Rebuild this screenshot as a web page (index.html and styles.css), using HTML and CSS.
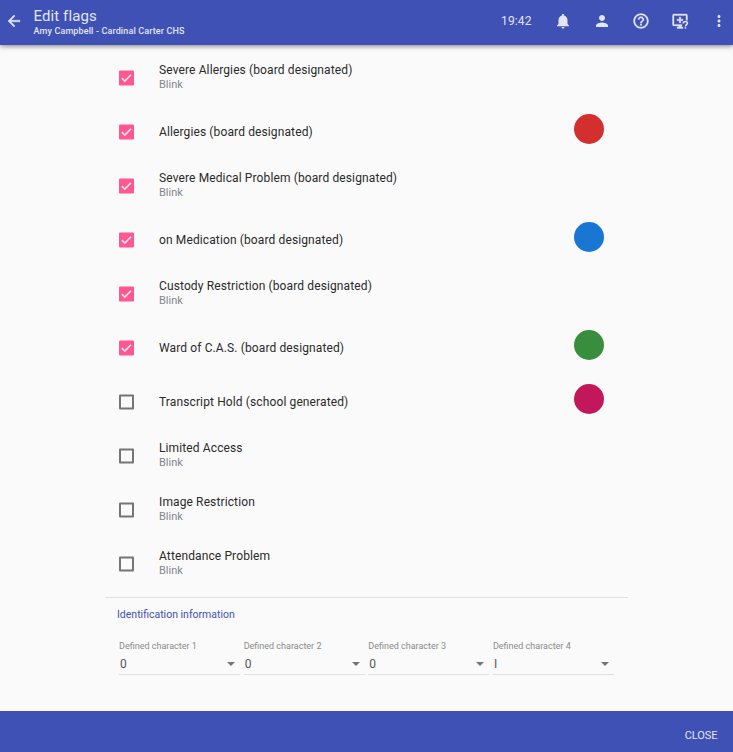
FILE: index.html
```html
<!DOCTYPE html>
<html lang="en">
<head>
<meta charset="utf-8">
<title>Edit flags</title>
<link rel="stylesheet" href="styles.css">
</head>
<body>
<header class="topbar">
  <svg class="back" viewBox="0 0 24 24"><path d="M20 11H7.83l5.59-5.59L12 4l-8 8 8 8 1.41-1.41L7.83 13H20z"/></svg>
  <div class="heading">
    <h1 class="title">Edit flags</h1>
    <p class="subtitle">Amy Campbell - Cardinal Carter CHS</p>
  </div>
  <span class="clock">19:42</span>
  <nav class="actions">
    <svg viewBox="0 0 24 24"><path d="M12 22c1.100 0 2-.9 2-2h-4c0 1.100.89 2 2 2zm6-6v-5c0-3.070-1.640-5.640-4.500-6.320V4c0-.83-.67-1.500-1.500-1.500s-1.500.67-1.500 1.500v.68C7.630 5.360 6 7.920 6 11v5l-2 2v1h16v-1z"/></svg>
    <svg viewBox="0 0 24 24"><path d="M12 12c2.210 0 4-1.790 4-4s-1.790-4-4-4-4 1.790-4 4 1.790 4 4 4zm0 2c-2.670 0-8 1.340-8 4v2h16v-2c0-2.660-5.330-4-8-4z"/></svg>
    <svg class="bold" viewBox="0 0 24 24"><path d="M11 18h2v-2h-2zM12 2C6.480 2 2 6.480 2 12s4.480 10 10 10 10-4.480 10-10S17.520 2 12 2zm0 18c-4.410 0-8-3.590-8-8s3.590-8 8-8 8 3.590 8 8-3.590 8-8 8zm0-14c-2.210 0-4 1.790-4 4h2c0-1.100.9-2 2-2s2 .9 2 2c0 2-3 1.750-3 5h2c0-2.250 3-2.500 3-5 0-2.210-1.790-4-4-4z"/></svg>
    <svg class="bold" viewBox="0 0 24 24"><path d="M4 2.500h16a2 2 0 0 1 2 2V11h-2V4.500H4v12h10.500v2H14V20h2v2H8v-2h2v-1.500H4a2 2 0 0 1-2-2v-12a2 2 0 0 1 2-2zM11 6.500h2v3h3v2h-3v3h-2v-3H8v-2h3z"/><path class="mark" d="M16.300 15.200c0-1.700 1.200-2.700 2.800-2.700s2.800 1 2.800 2.500c0 1.800-2.700 1.900-2.700 4.200M19.200 20.300v2"/></svg>
    <svg viewBox="0 0 24 24"><path d="M12 8c1.100 0 2-.9 2-2s-.9-2-2-2-2 .9-2 2 .9 2 2 2zm0 2c-1.100 0-2 .9-2 2s.9 2 2 2 2-.9 2-2-.9-2-2-2zm0 6c-1.100 0-2 .9-2 2s.9 2 2 2 2-.9 2-2-.9-2-2-2z"/></svg>
  </nav>
</header>

<main class="content">
  <ul class="flags">
    <li class="flag"><span class="box on"><svg viewBox="0 0 15 15"><path d="M2.800 7.600l3 3 6.200-6.400"/></svg></span><div class="label"><span class="name">Severe Allergies (board designated)</span><span class="note">Blink</span></div></li>
    <li class="flag"><span class="box on"><svg viewBox="0 0 15 15"><path d="M2.800 7.600l3 3 6.200-6.400"/></svg></span><div class="label"><span class="name">Allergies (board designated)</span></div><span class="dot red"></span></li>
    <li class="flag"><span class="box on"><svg viewBox="0 0 15 15"><path d="M2.800 7.600l3 3 6.200-6.400"/></svg></span><div class="label"><span class="name">Severe Medical Problem (board designated)</span><span class="note">Blink</span></div></li>
    <li class="flag"><span class="box on"><svg viewBox="0 0 15 15"><path d="M2.800 7.600l3 3 6.200-6.400"/></svg></span><div class="label"><span class="name">on Medication (board designated)</span></div><span class="dot blue"></span></li>
    <li class="flag"><span class="box on"><svg viewBox="0 0 15 15"><path d="M2.800 7.600l3 3 6.200-6.400"/></svg></span><div class="label"><span class="name">Custody Restriction (board designated)</span><span class="note">Blink</span></div></li>
    <li class="flag"><span class="box on"><svg viewBox="0 0 15 15"><path d="M2.800 7.600l3 3 6.200-6.400"/></svg></span><div class="label"><span class="name">Ward of C.A.S. (board designated)</span></div><span class="dot green"></span></li>
    <li class="flag"><span class="box"></span><div class="label"><span class="name">Transcript Hold (school generated)</span></div><span class="dot pink"></span></li>
    <li class="flag"><span class="box"></span><div class="label"><span class="name">Limited Access</span><span class="note">Blink</span></div></li>
    <li class="flag"><span class="box"></span><div class="label"><span class="name">Image Restriction</span><span class="note">Blink</span></div></li>
    <li class="flag"><span class="box"></span><div class="label"><span class="name">Attendance Problem</span><span class="note">Blink</span></div></li>
  </ul>
  <section class="ident">
    <h2 class="section-title">Identification information</h2>
    <div class="fields">
      <div class="field"><span class="caption">Defined character 1</span><div class="select"><span>0</span><i class="caret"></i></div></div>
      <div class="field"><span class="caption">Defined character 2</span><div class="select"><span>0</span><i class="caret"></i></div></div>
      <div class="field"><span class="caption">Defined character 3</span><div class="select"><span>0</span><i class="caret"></i></div></div>
      <div class="field"><span class="caption">Defined character 4</span><div class="select"><span>I</span><i class="caret"></i></div></div>
    </div>
  </section>
</main>

<footer class="bottombar"><span class="close">CLOSE</span></footer>
</body>
</html>
```
FILE: styles.css
```css
* { box-sizing: border-box; margin: 0; padding: 0; }
body {
  height: 752px;
  display: flex;
  flex-direction: column;
  overflow: hidden;
  background: #fafafa;
  color: #2a2a2a;
  font-family: Roboto, sans-serif;
}
.topbar {
  height: 45px;
  flex: none;
  display: flex;
  background: #3f51b5;
  color: #e2e5f4;
  box-shadow: 0 1px 5px rgba(0, 0, 0, .5);
}
.topbar svg { width: 18px; height: 18px; fill: currentColor; }
.topbar .back { margin: 12px 0 0 5px; stroke: currentColor; stroke-width: .6; }
.topbar .bold { stroke: currentColor; stroke-width: .4; }
.heading { margin-left: 10.500px; padding-top: 7px; flex: 1; }
.title { font-size: 15px; line-height: 18px; font-weight: 400; letter-spacing: .1px; }
.subtitle { font-size: 9px; line-height: 12px; font-weight: 500; letter-spacing: .13px; }
.clock { font-size: 12px; line-height: 14px; margin: 14px 22.500px 0 0; letter-spacing: .1px; }
.actions { display: flex; gap: 21px; padding: 12px 5px 0 0; }
.topbar .mark { fill: none; stroke: currentColor; stroke-width: 2; }

.content { flex: 1; padding: 6px 105px 0; }
.flags { list-style: none; padding: 0 24px 0 14px; }
.flag { height: 54px; display: flex; align-items: center; }
.box { width: 15px; height: 15px; border: 2px solid #757575; border-radius: 1px; margin-bottom: 1px; transform: translateY(.5px); }
.box.on { border: 0; background: #ff5790; }
.box svg { display: block; width: 15px; height: 15px; fill: none; stroke: #fde4ed; stroke-width: 1.600; }
.label { flex: 1; margin-left: 25px; display: flex; flex-direction: column; }
.name { font-size: 12px; line-height: 14px; letter-spacing: .12px; }
.name:not(:last-child) { margin-top: -1px; padding-bottom: 1px; }
.note { font-size: 11px; line-height: 14px; color: #85858f; }
.dot { width: 30px; height: 30px; border-radius: 50%; margin-bottom: 6px; }
.red { background: #d32f2f; }
.blue { background: #1976d2; }
.green { background: #388e3c; }
.pink { background: #c2185b; }

.ident { margin-top: 6px; border-top: 1px solid #e0e0e0; padding: 10px 14px 0 12px; }
.section-title { font-size: 10.500px; line-height: 14px; font-weight: 400; color: #3f51b5; }
.fields { display: flex; gap: 3.500px; margin: 18px 0 0 2px; }
.field { flex: 1; border-bottom: 1px solid #e0e0e0; }
.caption { display: block; font-size: 9px; line-height: 12px; color: #8a8a8a; }
.select { height: 22px; padding: 2px 5px 0 1px; display: flex; align-items: center; justify-content: space-between; font-size: 12px; color: #555; }
.caret { border: solid transparent; border-width: 4px 4px 0; border-top-color: #757575; margin-bottom: 1px; }

.bottombar { flex: none; height: 41px; background: #3f51b5; color: #e2e5f4; text-align: right; padding: 18px 15.500px 0 0; }
.close { display: block; font-size: 11px; line-height: 14px; letter-spacing: -.05px; }
```
